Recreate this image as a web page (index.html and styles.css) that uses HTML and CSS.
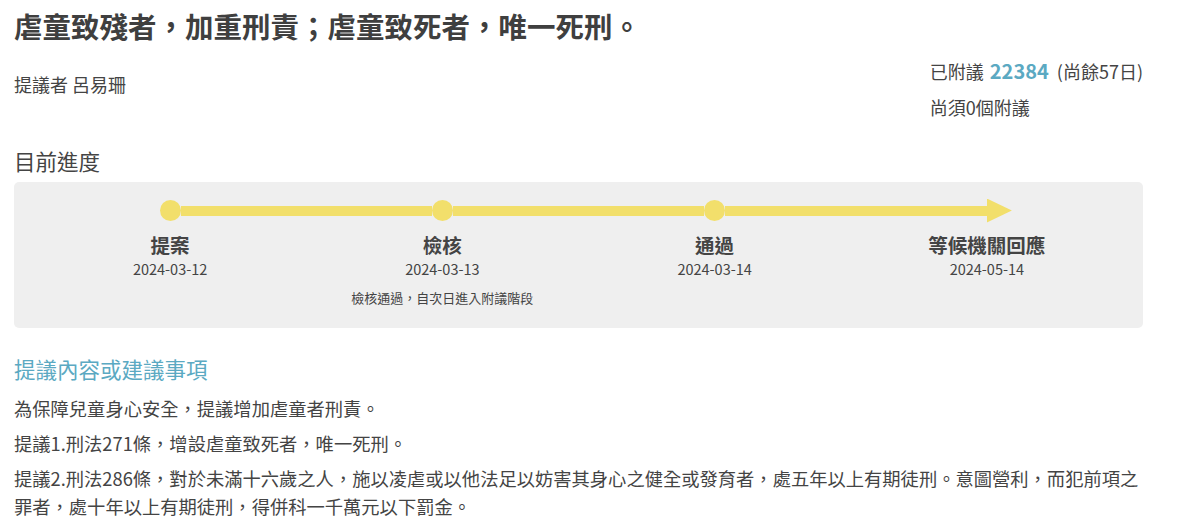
FILE: index.html
```html
<!DOCTYPE html>
<html lang="zh-Hant">
<head>
<meta charset="utf-8">
<title>虐童致殘者，加重刑責；虐童致死者，唯一死刑。</title>
<link rel="stylesheet" href="styles.css">
</head>
<body>
<main class="page">
  <h1 class="title">虐童致殘者，加重刑責；虐童致死者，唯一死刑。</h1>
  <div class="meta">
    <div class="proposer">提議者 呂易珊</div>
    <div class="stats">
      <div class="stat-line">已附議 <span class="count">22384</span> <span class="remain">(尚餘57日)</span></div>
      <div class="stat-line">尚須0個附議</div>
    </div>
  </div>

  <h2 class="section-title">目前進度</h2>
  <section class="progress">
    <div class="steps">
      <div class="step">
        <div class="marker"><span class="half none"></span><span class="dot"></span><span class="half"></span></div>
        <div class="step-name">提案</div>
        <div class="step-date">2024-03-12</div>
      </div>
      <div class="step">
        <div class="marker"><span class="half"></span><span class="dot"></span><span class="half"></span></div>
        <div class="step-name">檢核</div>
        <div class="step-date">2024-03-13</div>
        <div class="step-note">檢核通過，自次日進入附議階段</div>
      </div>
      <div class="step">
        <div class="marker"><span class="half"></span><span class="dot"></span><span class="half"></span></div>
        <div class="step-name">通過</div>
        <div class="step-date">2024-03-14</div>
      </div>
      <div class="step">
        <div class="marker"><span class="half"></span><span class="arrow"></span><span class="half none"></span></div>
        <div class="step-name">等候機關回應</div>
        <div class="step-date">2024-05-14</div>
      </div>
    </div>
  </section>

  <h2 class="section-title accent">提議內容或建議事項</h2>
  <div class="content">
    <p>為保障兒童身心安全，提議增加虐童者刑責。</p>
    <p>提議1.刑法271條，增設虐童致死者，唯一死刑。</p>
    <p>提議2.刑法286條，對於未滿十六歲之人，施以凌虐或以他法足以妨害其身心之健全或發育者，處五年以上有期徒刑。意圖營利，而犯前項之罪者，處十年以上有期徒刑，得併科一千萬元以下罰金。</p>
  </div>
</main>
</body>
</html>
```

FILE: styles.css
```css
* { box-sizing: border-box; }

html, body {
  margin: 0;
  padding: 0;
  background: #ffffff;
}

body {
  font-family: "Noto Sans CJK TC", "Noto Sans", sans-serif;
  color: #444444;
}

.page {
  width: 1129px;
  margin-left: 14px;
  padding-top: 8px;
}

.title {
  margin: 0;
  font-size: 28.5px;
  line-height: 36px;
  font-weight: 700;
  color: #3f3f3f;
}

.meta {
  display: flex;
  justify-content: space-between;
  align-items: flex-start;
  margin-top: 9px;
}

.proposer {
  padding-top: 13px;
  font-size: 18px;
  line-height: 36px;
}

.stats {
  font-size: 18px;
  line-height: 36px;
}

.count {
  color: #5ba9c2;
  font-size: 20px;
  font-weight: 600;
  margin: 0 4px 0 2px;
}

.section-title {
  margin: 21px 0 0;
  font-size: 21.5px;
  line-height: 30px;
  font-weight: 400;
  color: #444444;
}

.section-title.accent {
  margin-top: 26px;
  color: #5ba9c2;
}

.progress {
  margin-top: 6px;
  background: #efefef;
  border-radius: 5px;
  padding: 18px 20px 21px;
}

.steps {
  display: grid;
  grid-template-columns: repeat(4, 1fr);
}

.step {
  display: flex;
  flex-direction: column;
  align-items: stretch;
  text-align: center;
}

.marker {
  display: flex;
  align-items: center;
  height: 21px;
}

.half {
  flex: 1;
  height: 10px;
  background: #f2df6b;
}

.half.none {
  background: transparent;
}

.dot {
  flex: none;
  width: 21px;
  height: 21px;
  border-radius: 50%;
  background: #f2df6b;
}

.arrow {
  flex: none;
  width: 25px;
  height: 24px;
  margin-right: -25px;
  background: #f2df6b;
  clip-path: polygon(0 0, 100% 50%, 0 100%);
}

.step-name {
  margin-top: 11px;
  font-size: 19.5px;
  line-height: 26px;
  font-weight: 700;
  color: #444444;
}

.step-date {
  font-size: 14.5px;
  line-height: 22px;
  color: #444444;
}

.step-note {
  margin-top: 9px;
  font-size: 13px;
  line-height: 18px;
  color: #444444;
}

.content p {
  margin: 10px 0 0;
  font-size: 18.3px;
  line-height: 28px;
}

.content p + p {
  margin-top: 7px;
}
```
